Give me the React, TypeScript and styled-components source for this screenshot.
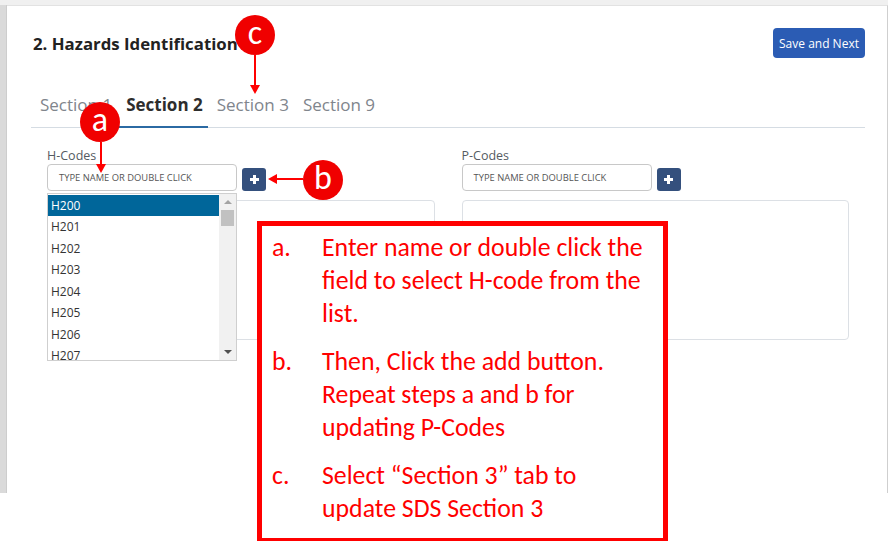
import React from 'react'
import styled, { createGlobalStyle, css } from 'styled-components'

const GlobalStyle = createGlobalStyle`
  html, body {
    margin: 0;
    padding: 0;
    background: #ffffff;
    font-family: "Open Sans", "Liberation Sans", sans-serif;
  }
  * { box-sizing: border-box; }
`

const hCodes = ['H200', 'H201', 'H202', 'H203', 'H204', 'H205', 'H206', 'H207']

const Page = styled.div`
  position: relative;
  width: 888px;
  height: 541px;
  overflow: hidden;
`

const Frame = styled.div`
  display: flex;
  height: 493px;
  padding-top: 5px;
  background: #f0f0f0;
`

const Rail = styled.div`
  width: 7px;
  background: #dadada;
  border-right: 1px solid #cdcdcd;
`

const Card = styled.div`
  flex: 1;
  background: #ffffff;
  border-right: 1px solid #cfcfcf;
  border-top: 1px solid #e2e2e2;
  padding: 22px 22px 0 24px;
`

const Header = styled.div`
  display: flex;
  justify-content: space-between;
  align-items: center;
  height: 30px;
`

const Title = styled.h2`
  margin: 0 0 0 2px;
  font-size: 16.8px;
  font-weight: 700;
  color: #222;
`

const PrimaryButton = styled.button`
  width: 92px;
  height: 30px;
  border: none;
  border-radius: 4px;
  background: #2b5cb4;
  color: #fff;
  font-family: inherit;
  font-size: 12px;
  padding: 0;
`

const Tabs = styled.div`
  display: flex;
  margin-top: 25px;
  border-bottom: 1px solid #d5dce3;
`

const Tab = styled.div<{ $active?: boolean }>`
  display: flex;
  align-items: center;
  height: 45px;
  padding: 0 5px 0 9px;
  font-size: 17px;
  color: #80858c;
  margin-bottom: -1px;
  border-bottom: 2px solid transparent;
  ${(p) =>
    p.$active &&
    css`
      color: #2d2d2d;
      font-weight: 700;
      border-bottom-color: #2b6aa3;
    `}
`

const Fields = styled.div`
  display: grid;
  grid-template-columns: 1fr 1fr;
  column-gap: 27px;
  padding: 19px 16px 0;
`

const Field = styled.div`
  display: flex;
  flex-direction: column;
`

const Label = styled.label`
  font-size: 12.5px;
  line-height: 17px;
  color: #555b62;
  height: 17px;
`

const InputRow = styled.div`
  position: relative;
  display: flex;
  align-items: center;
  gap: 5px;
`

const Input = styled.div`
  width: 190px;
  height: 27px;
  border: 1px solid #c8c8c8;
  border-radius: 4px;
  padding-left: 11px;
  display: flex;
  align-items: center;
  font-size: 9.4px;
  color: #555;
  text-transform: uppercase;
`

const AddButton = styled.div`
  width: 24px;
  height: 23px;
  margin-top: 3px;
  border-radius: 3px;
  background: #34507d;
  display: flex;
  align-items: center;
  justify-content: center;
`

const Box = styled.div`
  margin-top: 9px;
  height: 140px;
  border: 1px solid #dce0e5;
  border-radius: 4px;
`

const Dropdown = styled.div`
  position: absolute;
  top: 29px;
  left: 0;
  width: 190px;
  height: 168px;
  background: #fff;
  border: 1px solid #cfcfcf;
  display: flex;
  z-index: 2;
`

const Options = styled.div`
  flex: 1;
  padding-top: 1px;
`

const Option = styled.div<{ $selected?: boolean }>`
  height: 21.5px;
  line-height: 21px;
  padding-left: 3px;
  font-size: 12px;
  color: #333;
  ${(p) =>
    p.$selected &&
    css`
      background: #00669a;
      color: #fff;
      height: 21px;
    `}
`

const Scrollbar = styled.div`
  width: 17px;
  background: #f1f1f1;
  display: flex;
  flex-direction: column;
  align-items: center;
`

const ScrollArrow = styled.div<{ $down?: boolean }>`
  width: 0;
  height: 0;
  margin: ${(p) => (p.$down ? 'auto 0 6px' : '6px 0 0')};
  border-left: 4px solid transparent;
  border-right: 4px solid transparent;
  ${(p) =>
    p.$down
      ? css`border-top: 4px solid #505050;`
      : css`border-bottom: 4px solid #a3a3a3;`}
`

const ScrollThumb = styled.div`
  width: 13px;
  height: 16px;
  margin-top: 6px;
  background: #c1c1c1;
`

const Callout = styled.div`
  position: absolute;
  left: 257px;
  top: 221px;
  width: 411px;
  height: 322px;
  border: 5px solid #ff0000;
  background: #fff;
  padding: 5px 15px 0 10px;
  font-family: Carlito, Calibri, Lato, "Liberation Sans", sans-serif;
  color: #ff0000;
  font-size: 25.8px;
  line-height: 33px;
`

const Step = styled.div`
  display: flex;
  margin-bottom: 15px;
`

const StepKey = styled.span`
  width: 50px;
  flex-shrink: 0;
`

const StepText = styled.span`
  flex: 1;
`

const Marker = styled.div<{ $x: number; $y: number }>`
  position: absolute;
  left: ${(p) => p.$x - 20}px;
  top: ${(p) => p.$y - 20}px;
  width: 40px;
  height: 40px;
  border-radius: 50%;
  background: #f00000;
  color: #fff;
  display: flex;
  align-items: center;
  justify-content: center;
  font-family: Carlito, Calibri, Lato, "Liberation Sans", sans-serif;
  font-size: 34px;
  line-height: 1;
  padding-bottom: 4px;
`

const ArrowLayer = styled.svg`
  position: absolute;
  inset: 0;
  pointer-events: none;
`

const PlusIcon = () => (
  <svg width="9" height="9" viewBox="0 0 9 9">
    <rect x="3" y="0" width="3" height="9" fill="#fff" />
    <rect x="0" y="3" width="9" height="3" fill="#fff" />
  </svg>
)

const CodeField = ({ label, open }: { label: string; open?: boolean }) => (
  <Field>
    <Label>{label}</Label>
    <InputRow>
      <Input>Type name or double click</Input>
      <AddButton>
        <PlusIcon />
      </AddButton>
      {open && (
        <Dropdown>
          <Options>
            {hCodes.map((c, i) => (
              <Option key={c} $selected={i === 0}>
                {c}
              </Option>
            ))}
          </Options>
          <Scrollbar>
            <ScrollArrow />
            <ScrollThumb />
            <ScrollArrow $down />
          </Scrollbar>
        </Dropdown>
      )}
    </InputRow>
    <Box />
  </Field>
)

const App = () => (
  <Page>
    <GlobalStyle />
    <Frame>
      <Rail />
      <Card>
        <Header>
          <Title>2. Hazards Identification</Title>
          <PrimaryButton>Save and Next</PrimaryButton>
        </Header>
        <Tabs>
          <Tab>Section 1</Tab>
          <Tab $active>Section 2</Tab>
          <Tab>Section 3</Tab>
          <Tab>Section 9</Tab>
        </Tabs>
        <Fields>
          <CodeField label="H-Codes" open />
          <CodeField label="P-Codes" />
        </Fields>
      </Card>
    </Frame>

    <Callout>
      <Step>
        <StepKey>a.</StepKey>
        <StepText>Enter name or double click the field to select H-code from the list.</StepText>
      </Step>
      <Step>
        <StepKey>b.</StepKey>
        <StepText>Then, Click the add button. Repeat steps a and b for updating P-Codes</StepText>
      </Step>
      <Step>
        <StepKey>c.</StepKey>
        <StepText>Select “Section 3” tab to update SDS Section 3</StepText>
      </Step>
    </Callout>

    <ArrowLayer width="888" height="541">
      <line x1="255" y1="55" x2="255" y2="86" stroke="#f00" strokeWidth="2" />
      <polygon points="250,85 260,85 255,94" fill="#f00" />
      <line x1="101" y1="142" x2="101" y2="165" stroke="#f00" strokeWidth="2" />
      <polygon points="96,164 106,164 101,173" fill="#f00" />
      <line x1="303" y1="179" x2="276" y2="179" stroke="#f00" strokeWidth="2" />
      <polygon points="277,174 277,184 268,179" fill="#f00" />
    </ArrowLayer>
    <Marker $x={255} $y={35}>c</Marker>
    <Marker $x={100} $y={122}>a</Marker>
    <Marker $x={323} $y={180}>b</Marker>
  </Page>
)

export default App
